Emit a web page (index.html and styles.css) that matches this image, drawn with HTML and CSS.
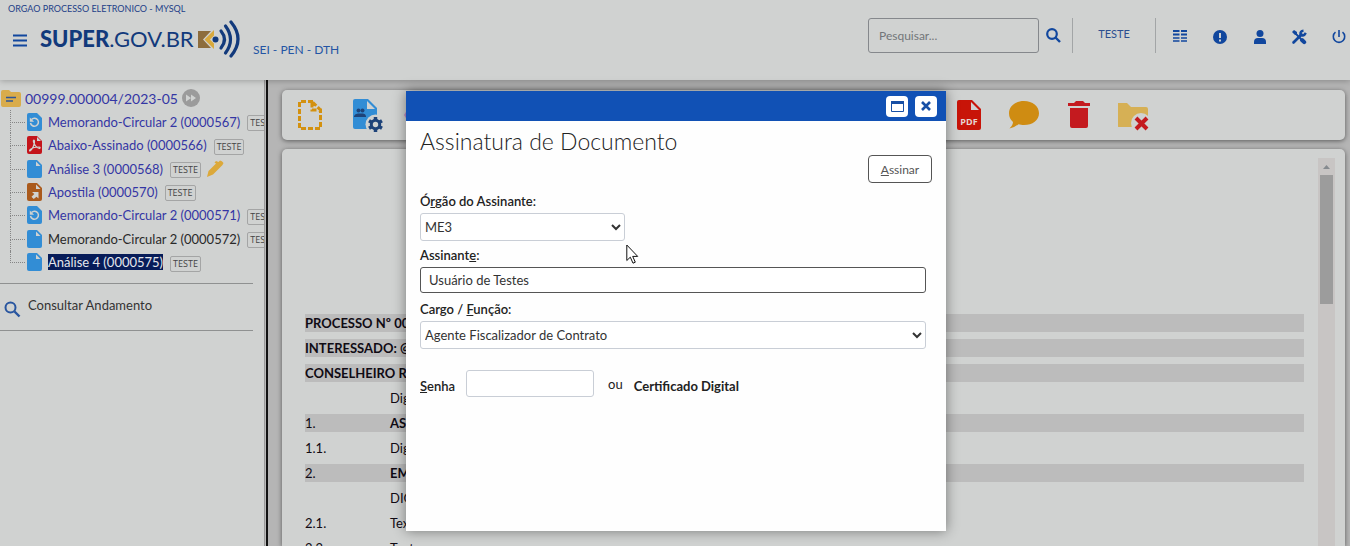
FILE: index.html
```html
<!DOCTYPE html>
<html lang="pt-BR">
<head>
<meta charset="utf-8">
<title>SUPER.GOV.BR - Assinatura de Documento</title>
<link rel="stylesheet" href="styles.css">
</head>
<body>
<svg class="sprite" aria-hidden="true">
  <symbol id="doc" viewBox="0 0 15 18"><path fill="#328dd5" d="M2 0h8l5 5v11a2 2 0 0 1-2 2H2a2 2 0 0 1-2-2V2a2 2 0 0 1 2-2z"/><path fill="#d0d2d1" d="M9 1.500v4.500h4.500z"/></symbol>
  <symbol id="doc-refresh" viewBox="0 0 15 18"><path fill="#328dd5" d="M2 0h8l5 5v11a2 2 0 0 1-2 2H2a2 2 0 0 1-2-2V2a2 2 0 0 1 2-2z"/><path fill="none" stroke="#d0d2d1" stroke-width="1.500" d="M4.500 6.500A4 4 0 1 1 3.500 10"/><path fill="#d0d2d1" d="M2.800 4.500v4.300h4.300z"/></symbol>
  <symbol id="doc-pdf" viewBox="0 0 15 18"><path fill="#c4141a" d="M2 0h8l5 5v11a2 2 0 0 1-2 2H2a2 2 0 0 1-2-2V2a2 2 0 0 1 2-2z"/><path fill="#d0d2d1" d="M10 1v4h4z"/><path fill="none" stroke="#d0d2d1" stroke-width="1.200" d="M3 15c2-1 5-7 4.500-10-.3-1.500-1.600-.6-1 1 1 3 3 5.500 5.500 6.300 1.500.3 1.500-1.300 0-1.300-3 0-7 1-8.500 2.300C2.500 14 2.200 15 3 15z"/></symbol>
  <symbol id="doc-out" viewBox="0 0 15 18"><path fill="#aa5a1c" d="M2 0h8l5 5v11a2 2 0 0 1-2 2H2a2 2 0 0 1-2-2V2a2 2 0 0 1 2-2z"/><path fill="#d0d2d1" d="M9 1.500v4.500h4.500zM5 9h6.500v6.500L9.500 13.700 6.700 16 4.500 13.800 7.300 11z"/></symbol>
</svg>

<header class="topbar">
  <div class="org">ORGAO PROCESSO ELETRONICO - MYSQL</div>
  <div class="brandrow">
    <button class="icon-btn menu" aria-label="Menu"><svg width="14" height="13" viewBox="0 0 14 13"><path stroke="#11479e" stroke-width="2" d="M0 1.500h14M0 6.500h14M0 11.500h14"/></svg></button>
    <a class="logo" href="#"><span class="wordmark"><b>SUPER</b>.GOV.BR</span>
      <svg width="45" height="40" viewBox="0 0 45 40"><path fill="#8d6d3c" d="M1 13h13L6 21.500 14 30H1z"/><path fill="#d8a93c" d="M17 12v5.500l-4 4 4 4V31L7.500 21.500z"/><circle cx="18.500" cy="21.500" r="3" fill="#123a7c"/><g fill="none" stroke="#123a7c" stroke-width="3.200" stroke-linecap="round"><path d="M24 13q7 8.500 0 17"/><path d="M28.500 8q10 13.500 0 27"/><path d="M34 4q14 17 0 34"/></g></svg></a>
    <span class="unit">SEI - PEN - DTH</span>
  </div>
  <div class="tools">
    <input class="search" type="text" placeholder="Pesquisar..." aria-label="Pesquisar">
    <button class="icon-btn find" aria-label="Buscar"><svg width="15" height="15" viewBox="0 0 15 15"><circle cx="6" cy="6" r="4.800" fill="none" stroke="#11479e" stroke-width="2.200"/><path stroke="#11479e" stroke-width="2.400" d="M9.500 9.500l4.500 4.500"/></svg></button>
    <a class="unitlink" href="#">TESTE</a>
    <nav class="quick">
      <button class="icon-btn" aria-label="Controle"><svg width="16" height="16" viewBox="0 0 16 16"><path stroke="#11479e" stroke-width="2" d="M2 2h6.500M10 2h6M2 5.500h6.500M10 5.500h6"/><path stroke="#11479e" stroke-width="1.500" d="M2 9h6.500M10 9h6M2 12h6.500M10 12h6"/></svg></button>
      <button class="icon-btn" aria-label="Avisos"><svg width="16" height="16" viewBox="0 0 16 16"><circle cx="9" cy="8" r="7" fill="#11479e"/><path stroke="#d0d2d1" stroke-width="2" d="M9 4v5M9 10.500v2"/></svg></button>
      <button class="icon-btn" aria-label="Usuário"><svg width="16" height="16" viewBox="0 0 16 16"><circle cx="9" cy="4.500" r="3.500" fill="#11479e"/><path fill="#11479e" d="M3 15v-2q0-4 4-4h4q4 0 4 4v2z"/></svg></button>
      <button class="icon-btn" aria-label="Configurações"><svg width="16" height="16" viewBox="0 0 16 16"><path stroke="#11479e" stroke-width="2.600" stroke-linecap="round" d="M2.500 13.500l8-8"/><path fill="none" stroke="#11479e" stroke-width="2.400" d="M12.500 1.800Q9 2 9.500 5.500q3 2.500 5.300-1.700"/><path stroke="#11479e" stroke-width="1.800" d="M3 3l7 7"/><path stroke="#11479e" stroke-width="4" stroke-linecap="round" d="M11 11l2.200 2.200"/><path fill="#11479e" d="M1 3l2-2 3 2v3H4z"/></svg></button>
      <button class="icon-btn" aria-label="Sair"><svg width="16" height="16" viewBox="0 0 16 16"><path fill="none" stroke="#11479e" stroke-width="1.600" d="M4.500 3.200a5.700 5.700 0 1 0 7 0M8 1v7"/></svg></button>
    </nav>
  </div>
</header>

<div class="workspace">
  <aside class="sidebar">
    <div class="root"><svg width="20" height="17" viewBox="0 0 20 17"><path fill="#d9ac4b" d="M2 0h6l2 2h8a2 2 0 0 1 2 2v11a2 2 0 0 1-2 2H2a2 2 0 0 1-2-2V2a2 2 0 0 1 2-2z"/><path stroke="#2f5596" stroke-width="1.700" d="M5 7.500h10M5 11h7"/></svg>
      <a href="#">00999.000004/2023-05</a>
      <svg width="18" height="18" viewBox="0 0 18 18"><circle cx="9" cy="9" r="9" fill="#9b9b9b"/><path fill="#d0d2d1" d="M4 5.500v7L9 9zM9 5.500v7L14 9z"/></svg></div>
    <ul class="tree">
      <li><svg class="ficon"><use href="#doc-refresh"/></svg><a href="#">Memorando-Circular 2 (0000567)</a><span class="tag">TESTE</span></li>
      <li><svg class="ficon"><use href="#doc-pdf"/></svg><a href="#">Abaixo-Assinado (0000566)</a><span class="tag">TESTE</span></li>
      <li><svg class="ficon"><use href="#doc"/></svg><a href="#">Análise 3 (0000568)</a><span class="tag">TESTE</span><svg width="17" height="17" viewBox="0 0 17 17"><path fill="#dca93b" d="M0 17l1.500-6L9 3.500 7.500 2.500 9 1l2.500 1L13 .5q2 0 3.500 2.500L15.500 5 6 14.500z"/></svg></li>
      <li><svg class="ficon"><use href="#doc-out"/></svg><a href="#">Apostila (0000570)</a><span class="tag">TESTE</span></li>
      <li><svg class="ficon"><use href="#doc-refresh"/></svg><a href="#">Memorando-Circular 2 (0000571)</a><span class="tag">TESTE</span></li>
      <li><svg class="ficon"><use href="#doc"/></svg><a class="seen" href="#">Memorando-Circular 2 (0000572)</a><span class="tag">TESTE</span></li>
      <li><svg class="ficon"><use href="#doc"/></svg><a class="current" href="#">Análise 4 (0000575)</a><span class="tag">TESTE</span></li>
    </ul>
    <a class="progress" href="#"><svg width="17" height="17" viewBox="0 0 17 17"><circle cx="6.500" cy="6.500" r="5" fill="none" stroke="#28559f" stroke-width="2"/><path stroke="#28559f" stroke-width="2.400" d="M10.500 10.500l5 5"/></svg><span>Consultar Andamento</span></a>
  </aside>
  <div class="splitter"></div>
  <main class="content">
    <div class="toolbar">
      <button class="tool" aria-label="Incluir documento"><svg width="32" height="32" viewBox="0 0 32 32"><path fill="none" stroke="#d3910f" stroke-width="3" stroke-dasharray="5 2" d="M19 2.500H5.500v27h21V11H18V2.500l8.500 8.500"/></svg></button>
      <button class="tool" aria-label="Acompanhamento"><svg width="36" height="34" viewBox="0 0 36 34"><path fill="#328dd5" d="M6 1h13l9 9v21H6q-2 0-2-2V3q0-2 2-2z"/><path fill="#d0d2d1" d="M18 3v8h8z"/><circle cx="9.500" cy="12.500" r="2" fill="#1e4379"/><circle cx="13.500" cy="12.500" r="2" fill="#1e4379"/><path fill="#1e4379" d="M5 19v-1q1-2.500 4-2.500h5q2.500 0 3 2.500v1z"/><circle cx="26.500" cy="26.500" r="10" fill="#d0d2d1"/><circle cx="26.500" cy="26.500" r="4.200" fill="none" stroke="#1e4379" stroke-width="3"/><path stroke="#1e4379" stroke-width="3.500" d="M26.500 19v3M26.500 31v3M20 22.700l2.600 1.500M30.400 28.800l2.600 1.500M20 30.300l2.600-1.500M30.400 24.200l2.600-1.500"/></svg></button>
      <button class="tool gap-after" aria-label="Ciência"><svg width="32" height="32" viewBox="0 0 32 32"><path fill="#c08fc6" d="M0 16L5 8h20l5 8-5 8H5z"/></svg></button>
      <button class="tool" aria-label="Gerar PDF"><svg width="32" height="32" viewBox="0 0 32 32"><path fill="#c81408" d="M6 1h13l9 9v19q0 2-2 2H6q-2 0-2-2V3q0-2 2-2z"/><path fill="#d0d2d1" d="M18 3v8h8z"/><text class="pdf" x="16" y="26" text-anchor="middle">PDF</text></svg></button>
      <button class="tool" aria-label="Comentários"><svg width="32" height="32" viewBox="0 0 32 32"><path fill="#cf8c12" d="M16 2c8.500 0 15 5.200 15 12.200S24.500 26 16 26c-2 0-4-.3-5.500-.8Q6 29 1.500 29.500 5 26 5 23 1 19.500 1 14.200C1 7.200 7.500 2 16 2z"/></svg></button>
      <button class="tool" aria-label="Excluir"><svg width="32" height="32" viewBox="0 0 32 32"><path fill="#c41a1f" d="M5 4h6l2-2h7l2 2h5v3H5zM7 9h18v18q0 2-2 2H9q-2 0-2-2z"/></svg></button>
      <button class="tool" aria-label="Encerrar processo"><svg width="34" height="32" viewBox="0 0 34 32"><path fill="#d6b055" d="M0 4h9l4 4h15q2 0 2 2v18H1q-2 0-2-2V6q0-2 1-2z"/><circle cx="23" cy="24" r="10" fill="#d0d2d1"/><path stroke="#c41a1f" stroke-width="4" d="M18 19l11 11M29 19L18 30"/></svg></button>
    </div>
    <section class="viewer">
      <div class="doc">
        <p class="line head">PROCESSO Nº 00</p>
        <p class="line head">INTERESSADO: @</p>
        <p class="line head">CONSELHEIRO RE</p>
        <p class="line item"><span></span><span>Dig</span></p>
        <p class="line item shaded"><span>1.</span><b>AS</b></p>
        <p class="line item"><span>1.1.</span><span>Dig</span></p>
        <p class="line item shaded"><span>2.</span><b>EM</b></p>
        <p class="line item"><span></span><span>DIG</span></p>
        <p class="line item"><span>2.1.</span><span>Tex</span></p>
        <p class="line item"><span>2.2.</span><span>Texto</span></p>
      </div>
      <div class="scroll"><svg width="17" height="17" viewBox="0 0 17 17"><path fill="#868b90" d="M5 11h7L8.500 7z"/></svg><div class="thumb"></div></div>
    </section>
  </main>
</div>

<div class="modal" role="dialog" aria-labelledby="dlg-title">
  <div class="modal-bar">
    <button class="win" aria-label="Maximizar"><svg width="13" height="11" viewBox="0 0 13 11"><path fill="none" stroke="#174fa5" d="M.5.500h12v10H.5z"/><path fill="#174fa5" d="M0 0h13v3H0z"/></svg></button>
    <button class="win" aria-label="Fechar"><svg width="10" height="10" viewBox="0 0 10 10"><path stroke="#174fa5" stroke-width="2.600" d="M1 1l8 8M9 1L1 9"/></svg></button>
  </div>
  <form class="modal-body">
    <h1 id="dlg-title">Assinatura de Documento</h1>
    <div class="actions"><button type="button" class="sign"><u>A</u>ssinar</button></div>
    <label for="orgao">Ó<u>r</u>gão do Assinante:</label>
    <select id="orgao" class="short"><option>ME3</option></select>
    <label for="assinante">Assinant<u>e</u>:</label>
    <input id="assinante" class="signer" type="text" value="Usuário de Testes">
    <label for="cargo">Cargo / <u>F</u>unção:</label>
    <select id="cargo"><option>Agente Fiscalizador de Contrato</option></select>
    <div class="auth">
      <label for="senha"><u>S</u>enha</label>
      <input id="senha" type="password">
      <span class="or">ou</span>
      <a href="#">Certificado Digital</a>
    </div>
  </form>
</div>
<svg class="cursor" width="13" height="21" viewBox="0 0 13 21"><path fill="#fff" stroke="#111" d="M.8 1v15.500l3.500-3.300 2.700 6 2.300-1-2.600-5.800h5z"/></svg>
</body>
</html>
```
FILE: styles.css
```css
* { box-sizing: border-box; }
body {
  margin: 0;
  height: 100vh;
  overflow: hidden;
  display: flex;
  flex-direction: column;
  position: relative;
  background: #b5b5b5;
  font-family: Lato, "Liberation Sans", sans-serif;
  font-size: 13px;
  color: #222;
}
svg { display: block; flex: none; }
a { color: inherit; text-decoration: none; }
button, input, select { font: inherit; color: inherit; margin: 0; }
.sprite { position: absolute; width: 0; height: 0; }
.icon-btn { border: 0; padding: 0; background: none; }

/* Top bar */
.topbar {
  display: grid;
  grid-template: 18px 62px / 1fr auto;
  background: #d0d2d1;
  color: #2455a4;
  box-shadow: 0 1px 6px #00000040;
  z-index: 1;
}
.org { padding-left: 8px; font-size: 9px; line-height: 18px; color: #233f88; }
.brandrow { grid-row: 2; grid-column: 1; display: flex; align-items: flex-start; }
.menu { margin: 16px 13px 0 13px; }
.logo { display: flex; color: #123a7c; }
.wordmark { font-size: 22px; line-height: 42px; width: 157px; white-space: nowrap; }
.wordmark b { font-weight: 900; }
.unit { margin: 22px 0 0 11px; font-size: 12px; line-height: 20px; }
.tools { grid-row: 1 / 3; grid-column: 2; display: flex; align-items: flex-start; padding: 18px 3px 0 0; }
.search {
  width: 171px;
  height: 35px;
  padding: 0 10px;
  border: 1px solid #85888c;
  border-radius: 3px;
  background: transparent;
  font-size: 12px;
}
.search::placeholder { color: #737679; }
.find { margin: 10px 11px 0 7px; }
.unitlink {
  height: 35px;
  width: 84px;
  border: solid #a2a5a6;
  border-width: 0 1px;
  font-size: 11px;
  line-height: 32px;
  text-align: center;
  color: #2c4f90;
}
.quick { display: flex; gap: 24px; padding: 11px 0 0 15px; }

/* Process tree */
.workspace { flex: 1; min-height: 0; display: flex; }
.sidebar { width: 264px; overflow: hidden; background: #d0d2d1; padding-top: 8px; white-space: nowrap; }
.root { display: flex; align-items: center; gap: 4px; height: 20px; padding-left: 1px; font-size: 14px; color: #3436a4; }
.tree {
  list-style: none;
  margin: 2px 0 0 10px;
  padding: 0;
  display: grid;
  min-height: 164px;
}
.tree li { display: flex; align-items: center; color: #3436a4; position: relative; padding-left: 17px; }
.tree li::before {
  content: "";
  position: absolute;
  left: 0;
  top: 0;
  width: 14px;
  height: 50%;
  border: dotted #858585;
  border-width: 0 0 1px 1px;
}
.tree li:not(:last-child)::after {
  content: "";
  position: absolute;
  left: 0;
  top: 50%;
  height: 50%;
  border-left: 1px dotted #858585;
}
.ficon { width: 15px; height: 18px; margin-right: 6px; }
.tag {
  margin: 3px 6px 0 7px;
  padding: 0 2px;
  border: 1px solid #a4a5a5;
  border-radius: 2px;
  font: 9px/14px "Open Sans", sans-serif;
  color: #444;
}
.tree .seen { color: #292929; }
.tree .current { background: #071c59; color: #e4e7ec; }
.progress {
  display: flex;
  align-items: flex-start;
  gap: 7px;
  height: 48px;
  margin: 9px 11px 0 0;
  padding: 13px 0 0 4px;
  border: solid #8f9191;
  border-width: 1px 0;
  color: #333;
}
.progress svg { margin-top: 4px; }
.splitter { width: 4px; background: #b9b9b9; border-left: 1px solid #999; border-right: 2px solid #111; }

/* Content area */
.content { flex: 1; min-width: 0; display: flex; flex-direction: column; gap: 9px; padding: 10px 5px 0 14px; }
.toolbar, .viewer { background: #d0d2d1; border-radius: 5px; box-shadow: 0 1px 5px #00000080; }
.toolbar { height: 50px; display: flex; align-items: center; gap: 23px; padding-left: 12px; }
.tool { width: 32px; height: 34px; flex: none; border: 0; padding: 0; background: none; }
.gap-after { margin-right: 494px; }
.pdf { font: 700 9px "Open Sans", sans-serif; fill: #e6d5d3; }
.viewer { flex: 1; min-height: 0; overflow: hidden; display: flex; padding: 9px 10px 0 23px; border-radius: 5px 5px 0 0; }
.doc { flex: 1; padding-top: 156px; margin-right: 14px; display: flex; flex-direction: column; gap: 7px; color: #100b14; }
.line { margin: 0; height: 18px; line-height: 18px; flex: none; white-space: nowrap; }
.head { font-weight: 700; }
.head, .shaded { background: #bcbcbc; }
.item { display: grid; grid-template-columns: 85px 1fr; }
.scroll { width: 17px; background: #c8c5c4; }
.thumb { height: 129px; margin: 0 2px; background: #9c9c9c; }

/* Signature dialog */
.modal {
  position: absolute;
  z-index: 2;
  top: 91px;
  left: 2px;
  right: 0;
  margin: 0 auto;
  width: 540px;
  min-height: 440px;
  background: #fefefe;
  box-shadow: 0 0 12px #00000070;
}
.modal-bar { height: 30px; display: flex; justify-content: flex-end; align-items: center; gap: 7px; padding-right: 9px; background: #1151b5; }
.win { width: 22px; height: 21px; padding: 0; border: 0; border-radius: 4px; background: #fff; display: grid; place-items: center; }
.modal-body { padding: 6px 20px 0 14px; display: flex; flex-direction: column; }
h1 { margin: 0; font-size: 23px; line-height: 28px; font-weight: 300; color: #222; }
.actions { display: flex; justify-content: flex-end; margin-right: -6px; }
.sign { width: 64px; height: 28px; padding: 0; border: 1px solid #555; border-radius: 4px; background: #fff; color: #555; font-size: 12px; }
.modal-body label { font-weight: 600; line-height: 16px; margin: 6px 0 4px; }
.actions + label { margin-top: 10px; }
.modal-body .signer + label { margin-top: 8px; }
.modal-body select, .modal-body input { height: 28px; border: 1px solid #c9ced6; border-radius: 3px; background: #fff; color: #333; }
.modal-body select { padding: 0; }
.modal-body .short { width: 205px; }
.modal-body .signer { height: 26px; padding: 0 8px; border-color: #555; }
.auth { display: flex; align-items: center; margin-top: 21px; }
.modal-body .auth label { margin: 5px 11px 0 0; }
.modal-body .auth input { width: 128px; height: 27px; }
.or { margin: 0 11px 0 14px; }
.auth a { font-weight: 700; margin-top: 5px; }
.cursor { position: absolute; z-index: 3; left: 626px; top: 244px; }
```
